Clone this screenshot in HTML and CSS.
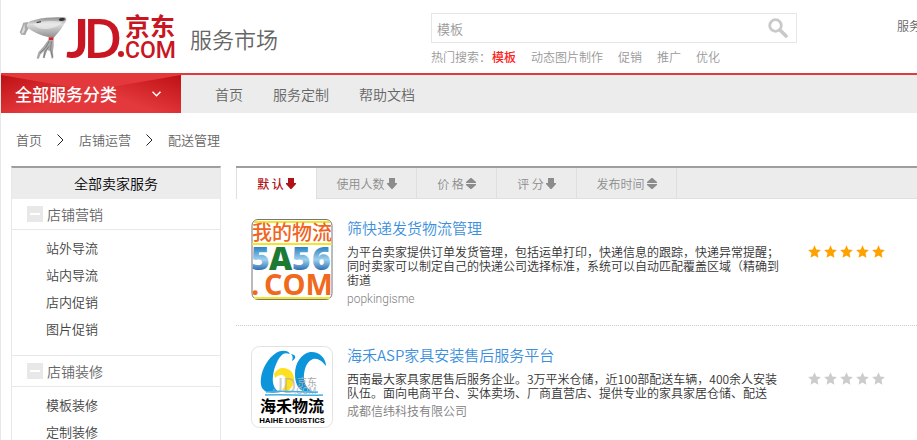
FILE: index.html
```html
<!DOCTYPE html>
<html lang="zh-CN">
<head>
    <meta charset="UTF-8">
    <meta name="viewport" content="width=device-width, initial-scale=1.0">
    <title>京东服务市场</title>
    <link rel="stylesheet" href="styles.css">
</head>
<body>
    <!-- shared icons -->
    <svg class="defs" width="0" height="0" aria-hidden="true">
        <symbol id="star" viewBox="0 0 13 13"><path d="M6.5 0.3l1.8 4.1 4.6.5-3.4 3.1.9 4.7-3.9-2.3-3.9 2.3.9-4.7L.1 4.9l4.6-.5z"/></symbol>
        <symbol id="down" viewBox="0 0 10 11"><path d="M2 0h6v5h2v1L5.500 11h-1L0 6V5h2z"/></symbol>
        <symbol id="sort" viewBox="0 0 10 11"><path d="M4.500 0h1L10 4v1H0V4zM0 6h10v1l-4.500 4h-1L0 7z"/></symbol>
        <symbol id="next" viewBox="0 0 7 12"><path d="M.5.5L6 6 .5 11.500" fill="none" stroke="#222"/></symbol>
    </svg>

    <header class="header">
        <a class="brand" href="#">
            <svg class="logo" viewBox="18 14 162 48" role="img" aria-label="JD.COM 京东">
                <defs>
                    <linearGradient id="fur" x1="0" y1="0" x2="0" y2="1">
                        <stop offset="0" stop-color="#8b8b8b"/>
                        <stop offset=".35" stop-color="#dcdcdc"/>
                        <stop offset="1" stop-color="#8f8f8f"/>
                    </linearGradient>
                </defs>
                <g transform="scale(.33333)">
                    <path d="M84 66l-14 2-7 20-4 9 5 7 12 1 4-10 7-12z" fill="#a9a9a9"/>
                    <path d="M73 71l-5 18-4 9 5 3 6-12z" fill="#ddd"/>
                    <path d="M80 76c2-11 12-14 26-17 24-6 54-8 82-7 10 0 13 4 10 10-9 19-22 35-37 51l-14-1c-24-5-48-15-66-30z" fill="url(#fur)"/>
                    <path d="M99 72c28-10 56-11 88-6-12 14-34 22-57 21-13-1-24-6-31-15z" fill="#f0f0f0" opacity=".65"/>
                    <path d="M176 59c2-6 16-6 19-2 0 6-15 9-19 2z" fill="#343434"/>
                    <path d="M110 68l13-3" stroke="#444" stroke-width="4"/>
                    <path d="M145 119l16 0 0 19-2 15 1 21-5 2-5-22-8-4-9 25-5-2 4-20-10 10-6 14-6-2 5-18 16-18z" fill="#aaa"/>
                    <path d="M148 123l-11 20-17 16M154 124l-2 24 6 24M147 139l-12 17-3 18" fill="none" stroke="#666" stroke-width="2"/>
                    <path d="M146 112h15l-1 8h-14z" fill="#d8232a"/>
                </g>
                <g fill="#c81623">
                    <text x="66" y="58" class="logo-j">J</text>
                    <text x="83" y="58" class="logo-d">D</text>
                    <circle cx="121" cy="54" r="3"/>
                    <text x="125" y="36" class="logo-cn">京东</text>
                    <text x="125" y="58" class="logo-com">COM</text>
                </g>
            </svg>
            <span class="slogan">服务市场</span>
        </a>
        <div class="search">
            <form class="search-box">
                <input type="text" value="模板" aria-label="搜索">
                <button type="submit" aria-label="搜索">
                    <svg width="20" height="20" viewBox="0 0 20 20"><circle cx="7.500" cy="7.500" r="5.800" fill="none" stroke="#c9c9c9" stroke-width="2.800"/><path d="M12 12l6 6" stroke="#c9c9c9" stroke-width="3.600" stroke-linecap="round"/></svg>
                </button>
            </form>
            <div class="hot">
                <span>热门搜索：</span>
                <a class="current" href="#">模板</a>
                <a href="#">动态图片制作</a>
                <a href="#">促销</a>
                <a href="#">推广</a>
                <a href="#">优化</a>
            </div>
        </div>
        <a class="header-link" href="#">服务</a>
    </header>

    <nav class="nav">
        <button class="category" type="button">
            <span>全部服务分类</span>
            <svg width="9" height="6" viewBox="0 0 9 6"><path d="M.5.7l4 4 4-4" fill="none" stroke="#fff" stroke-width="1.500"/></svg>
        </button>
        <a href="#">首页</a>
        <a href="#">服务定制</a>
        <a href="#">帮助文档</a>
    </nav>

    <div class="crumbs">
        <a href="#">首页</a>
        <svg width="7" height="12"><use href="#next"/></svg>
        <a href="#">店铺运营</a>
        <svg width="7" height="12"><use href="#next"/></svg>
        <a href="#">配送管理</a>
    </div>

    <div class="main">
        <aside class="sidebar">
            <h2>全部卖家服务</h2>
            <h3><i class="minus"></i>店铺营销</h3>
            <ul>
                <li><a href="#">站外导流</a></li>
                <li><a href="#">站内导流</a></li>
                <li><a href="#">店内促销</a></li>
                <li><a href="#">图片促销</a></li>
            </ul>
            <h3><i class="minus"></i>店铺装修</h3>
            <ul>
                <li><a href="#">模板装修</a></li>
                <li><a href="#">定制装修</a></li>
            </ul>
        </aside>

        <section class="content">
            <div class="tabs">
                <button class="tab active" type="button">默 认<svg width="10" height="11"><use href="#down"/></svg></button>
                <button class="tab wide" type="button">使用人数<svg width="10" height="11"><use href="#down"/></svg></button>
                <button class="tab" type="button">价 格<svg width="10" height="11"><use href="#sort"/></svg></button>
                <button class="tab" type="button">评 分<svg width="10" height="11"><use href="#down"/></svg></button>
                <button class="tab wide" type="button">发布时间<svg width="10" height="11"><use href="#sort"/></svg></button>
            </div>

            <article class="item">
                <svg class="thumb" viewBox="0 0 82 82">
                    <defs>
                        <linearGradient id="sky" x1="0" y1="0" x2="0" y2="1">
                            <stop offset=".2" stop-color="#1673b8"/>
                            <stop offset=".55" stop-color="#9fd0ec"/>
                            <stop offset=".8" stop-color="#2a6cb0"/>
                        </linearGradient>
                    </defs>
                    <rect x="1" y=".5" width="80" height="80" rx="6" fill="#fff" stroke="#777"/>
                    <path d="M3 3h76M1 25h80M3 79h76" stroke="#f2e62c" stroke-width="2"/>
                    <text x="1" y="21" class="t1-cn">我的物流</text>
                    <g class="t1-num">
                        <text x="0" y="51" fill="url(#sky)">5</text>
                        <text x="18" y="51" fill="#1d7a35">A</text>
                        <text x="41" y="51" fill="url(#sky)">5</text>
                        <text x="61" y="51" fill="url(#sky)">6</text>
                    </g>
                    <text x="0" y="76" class="t1-com">.</text>
                    <text x="13" y="76" class="t1-com">COM</text>
                </svg>
                <div class="info">
                    <a class="title" href="#">筛快递发货物流管理</a>
                    <p>为平台卖家提供订单发货管理，包括运单打印，快递信息的跟踪，快递异常提醒；同时卖家可以制定自己的快递公司选择标准，系统可以自动匹配覆盖区域（精确到街道</p>
                    <span class="seller">popkingisme</span>
                </div>
                <div class="stars on">
                    <svg><use href="#star"/></svg>
                    <svg><use href="#star"/></svg>
                    <svg><use href="#star"/></svg>
                    <svg><use href="#star"/></svg>
                    <svg><use href="#star"/></svg>
                </div>
            </article>

            <article class="item">
                <svg class="thumb" viewBox="0 0 82 82">
                    <rect x=".5" y=".5" width="81" height="81" rx="8" fill="#fff" stroke="#e2e2e2"/>
                    <path d="M23 28c3-5 6-6 9-6 7 0 11 5 11 11 0 5-2 9-6 12l-6-1c3-3 4-6 4-9 0-4-2-6-5-6-2 0-4 1-6 3z" fill="#fde021"/>
                    <path d="M39 8c-2-4-9-4-14-1-8 5-14 16-15 25-1 8 1 12 6 14 5 1 8 1 12 0-5-3-7-9-6-16 1-9 5-18 10-22 2-1 4-1 7 0z" fill="#0d95dc"/>
                    <path d="M41 15c1-3 1-5-1-7 5 1 6 4 1 7z" fill="#0d95dc"/>
                    <path d="M75 20c0-9-8-15-16-14-9 2-15 11-15 22 0 9 3 15 8 17l10 1c-7-4-10-10-9-18 1-8 4-13 9-15 5-1 9 2 13 7z" fill="#0d95dc"/>
                    <text x="21" y="47" class="t2-mark">JD</text>
                    <text x="46" y="40" class="t2-mark-cn">京东</text>
                    <text x="43" y="48" class="t2-mark-com">.COM</text>
                    <path d="M15 46c19-2 40 1 52 0M14 49c20-1 37 1 58 0" fill="none" stroke="#45aee3" stroke-width="1.500"/>
                    <text x="9" y="66" class="t2-cn">海禾物流</text>
                    <text x="41" y="77" class="t2-en" text-anchor="middle">HAIHE LOGISTICS</text>
                </svg>
                <div class="info">
                    <a class="title" href="#">海禾ASP家具安装售后服务平台</a>
                    <p>西南最大家具家居售后服务企业。3万平米仓储，近100部配送车辆，400余人安装队伍。面向电商平台、实体卖场、厂商直营店、提供专业的家具家居仓储、配送</p>
                    <span class="seller">成都信纬科技有限公司</span>
                </div>
                <div class="stars">
                    <svg><use href="#star"/></svg>
                    <svg><use href="#star"/></svg>
                    <svg><use href="#star"/></svg>
                    <svg><use href="#star"/></svg>
                    <svg><use href="#star"/></svg>
                </div>
            </article>
        </section>
    </div>
</body>
</html>
```

FILE: styles.css
```css
* {
    box-sizing: border-box;
}
body {
    margin: 0;
    border-left: 1px solid #e8e8e8;
    background: #fff;
    color: #666;
    font-family: "Noto Sans CJK SC", sans-serif;
    font-size: 12px;
    font-weight: 350;
    overflow-x: hidden;
}
a {
    color: inherit;
    text-decoration: none;
}
button, input {
    font: inherit;
    color: inherit;
    border: 0;
    padding: 0;
    background: none;
}
button {
    cursor: pointer;
}
h2, h3, p, ul {
    margin: 0;
    padding: 0;
    font-weight: inherit;
}
ul {
    list-style: none;
}
.defs {
    position: absolute;
}

/* header */
.header {
    display: flex;
    align-items: flex-start;
    height: 75px;
    padding-left: 17px;
    border-bottom: 2px solid #e4393c;
    overflow: hidden;
}
.brand {
    display: flex;
    gap: 10px;
    width: 413px;
    flex-shrink: 0;
    padding-top: 14px;
}
.logo {
    width: 162px;
    height: 48px;
    overflow: visible;
}
.logo-j {
    font: 700 54px Lato, sans-serif;
}
.logo-d {
    font: 600 54px "Open Sans", sans-serif;
}
.logo-cn {
    font: 700 25px "Noto Sans CJK SC", sans-serif;
}
.logo-com {
    font: 500 23px Roboto, sans-serif;
}
.slogan {
    font-size: 22px;
    line-height: 48px;
}
.search {
    width: 366px;
    flex-shrink: 0;
    padding-top: 13px;
}
.search-box {
    display: flex;
    align-items: center;
    height: 30px;
    padding: 0 8px 0 5px;
    border: 1px solid #e6e6e6;
}
.search-box input {
    flex: 1;
    min-width: 0;
    color: #999;
    font-size: 13px;
    outline: none;
}
.search-box button {
    height: 20px;
}
.search-box svg {
    display: block;
}
.hot {
    display: flex;
    gap: 15px;
    color: #999;
    line-height: 28px;
}
.hot span {
    margin-right: -14px;
}
.hot .current {
    color: #ff2020;
    font-weight: 500;
}
.header-link {
    flex-shrink: 0;
    margin-left: 100px;
    padding-top: 16px;
    line-height: 20px;
}

/* nav */
.nav {
    display: flex;
    gap: 30px;
    height: 38px;
    background: #ececec;
    font-size: 14px;
    line-height: 38px;
}
.category {
    position: relative;
    display: flex;
    align-items: center;
    justify-content: space-between;
    width: 180px;
    margin-right: 4px;
    padding: 0 20px 0 14px;
    background: linear-gradient(160deg, #bd1014, rgba(228, 57, 60, 0) 45%), linear-gradient(200deg, #bd1014, rgba(228, 57, 60, 0) 45%), #e4393c;
    color: #fff;
    font-size: 17px;
    font-weight: 500;
}
.category::before {
    content: "";
    position: absolute;
    top: 0;
    left: 0;
    width: 100%;
    height: 14px;
    background: #e4393c;
    clip-path: polygon(0 0, 100% 0, 55% 100%, 45% 100%);
}
.category span {
    position: relative;
}

/* breadcrumb */
.crumbs {
    display: flex;
    align-items: center;
    gap: 15px;
    height: 53px;
    padding-left: 15px;
    font-size: 13px;
}

/* columns */
.main {
    display: flex;
    align-items: flex-start;
    gap: 15px;
    padding-left: 10px;
}
.sidebar {
    width: 210px;
    flex-shrink: 0;
    border: 1px solid #e8e8e8;
    border-top: 2px solid #9e9e9e;
    font-size: 13px;
}
.sidebar h2 {
    background: #ececec;
    color: #000;
    font-size: 14px;
    line-height: 31px;
    text-align: center;
}
.sidebar h3 {
    display: flex;
    align-items: center;
    gap: 4px;
    height: 31px;
    padding-left: 15px;
    border-bottom: 1px solid #e8e8e8;
    font-size: 14px;
}
.minus {
    display: flex;
    align-items: center;
    justify-content: center;
    width: 16px;
    height: 16px;
    background: #e8e8e8;
}
.minus::before {
    content: "";
    width: 10px;
    height: 2px;
    background: #fff;
}
.sidebar ul {
    padding: 4px 0 13px 34px;
    border-bottom: 1px solid #e8e8e8;
    color: #444;
    line-height: 27px;
}
.content {
    flex: 1;
    min-width: 0;
}
.tabs {
    display: flex;
    height: 33px;
    border-top: 2px solid #9e9e9e;
    background: #ececec;
    box-shadow: inset 0 -1px #dfdfdf;
}
.tab {
    display: flex;
    align-items: center;
    justify-content: center;
    gap: 2px;
    width: 80px;
    border-right: 1px solid #dfdfdf;
    color: #8c8c8c;
}
.tab svg {
    fill: #8c8c8c;
}
.tab.wide {
    width: 100px;
}
.tab.active {
    width: 81px;
    border-left: 1px solid #dfdfdf;
    background: #fff;
    color: #b01217;
    font-weight: 500;
}
.tab.active svg {
    fill: #b01217;
}

/* service list */
.item {
    display: flex;
    align-items: flex-start;
    padding: 20px 0 18px 15px;
    border-bottom: 1px dotted #ccc;
}
.thumb {
    width: 82px;
    height: 82px;
    flex-shrink: 0;
    margin-right: 14px;
}
.info {
    width: 436px;
    flex-shrink: 0;
}
.title {
    display: block;
    color: #3c8fdc;
    font-size: 15px;
    line-height: 18px;
}
.info p {
    margin: 8px 0 4px;
    color: #333;
    line-height: 14px;
}
.seller {
    display: block;
    color: #808080;
    font-family: Roboto, "Noto Sans CJK SC", sans-serif;
    line-height: 16px;
}
.stars {
    display: flex;
    gap: 3px;
    margin: 26px 0 0 25px;
    fill: #ccc;
}
.stars.on {
    fill: #ffa200;
}
.stars svg {
    width: 13px;
    height: 13px;
}

/* thumbnails */
.t1-cn {
    font: 500 20px "Noto Sans CJK SC", sans-serif;
    fill: #f0641e;
}
.t1-num {
    font: 800 32px "Open Sans", sans-serif;
}
.t1-com {
    font: 700 29px "Open Sans", sans-serif;
    fill: #f0691c;
}
.t2-mark {
    font: 20px Roboto, sans-serif;
    fill: #aaa;
    opacity: .6;
}
.t2-mark-cn {
    font: 10px "Noto Sans CJK SC", sans-serif;
    fill: #aaa;
}
.t2-mark-com {
    font: 9px Roboto, sans-serif;
    fill: #bbb;
}
.t2-cn {
    font: 700 16px "Noto Sans CJK SC", sans-serif;
    fill: #000;
}
.t2-en {
    font: 700 8px "Liberation Sans Narrow", Roboto, sans-serif;
    fill: #000;
}
```
